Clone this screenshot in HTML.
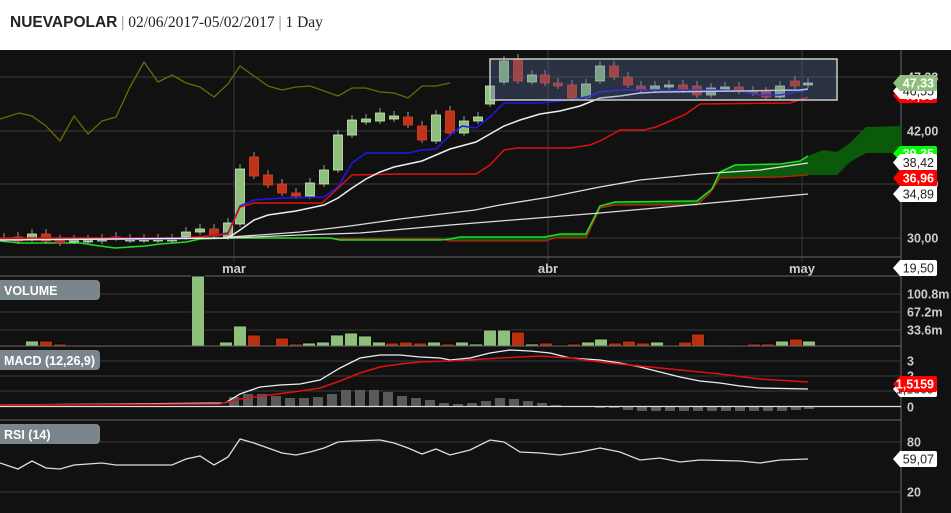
<!DOCTYPE html>
<html><head><meta charset="utf-8"><style>
html,body{margin:0;padding:0;background:#fff;width:951px;height:513px;overflow:hidden;font-family:"Liberation Sans",sans-serif}
#hdr{position:absolute;left:10px;top:14px;font-size:15.5px;color:#222;font-family:"Liberation Serif",serif}
#hdr b{font-family:"Liberation Sans",sans-serif;font-weight:bold}
#hdr span{color:#777}
svg{position:absolute;left:0;top:50px}
</style></head><body>
<div id="hdr"><b>NUEVAPOLAR</b> <span>|</span> 02/06/2017-05/02/2017 <span>|</span> 1 Day</div>
<svg id="s" width="951" height="463" viewBox="0 50 951 463" xmlns="http://www.w3.org/2000/svg" font-family="Liberation Sans, sans-serif"></svg>
<script>
const s=document.getElementById('s');let h='';
h+='<rect x="0" y="50" width="951" height="463" fill="#111"/>';
[77,131,184,238].forEach(y=>h+=`<line x1="0" x2="901" y1="${y}" y2="${y}" stroke="#3a3a3a"/>`);
[294,312,330,361,376,391,442,492].forEach(y=>h+=`<line x1="0" x2="901" y1="${y}" y2="${y}" stroke="#3a3a3a"/>`);
[234,548,802].forEach(x=>h+=`<line x1="${x}" x2="${x}" y1="50" y2="262" stroke="#3a3a3a"/>`);
[257,276,420].forEach(y=>h+=`<line x1="0" x2="901" y1="${y}" y2="${y}" stroke="#666"/>`);
h+='<line x1="901" x2="901" y1="50" y2="513" stroke="#666"/>';
[[234,'mar'],[548,'abr'],[802,'may']].forEach(a=>h+=`<text x="${a[0]}" y="273" fill="#ccc" font-size="13" font-weight="bold" text-anchor="middle">${a[1]}</text>`);
const G=[[450,239],[460,237],[545,237],[560,234],[586,234],[600,206],[615,202],[697,201],[712,189],[720,172],[735,165],[780,164],[800,161],[808,156]];
const R=[[450,241],[545,241],[555,238],[586,238],[600,208],[615,205],[697,205],[710,193],[720,178],[780,177],[808,175]];
const G0=[[0,241],[20,243],[80,243],[100,246],[115,248],[145,246],[160,244],[186,242],[200,239],[230,238],[330,238],[340,240],[440,240]];
const R0=[[0,239],[230,238],[330,238],[340,239],[440,239]];
const P=a=>a.map(p=>p.join(',')).join(' ');
h+=`<polygon points="${P(G.concat(R.slice().reverse()))}" fill="#0b5a0b"/>`;
h+=`<polygon points="808,156 823,150 837,152 850,143 866,127 901,126 901,153 866,153 850,162 837,175 808,175" fill="#0b5a0b"/>`;
const L=(a,c,w)=>h+=`<polyline points="${P(a)}" fill="none" stroke="${c}" stroke-width="${w||1.3}"/>`;
L(R0.concat(R),'#c02010');L(G0.concat(G),'#22dd22',1.6);
L([[0,119],[19,113],[32,116],[46,126],[60,141],[74,116],[88,134],[102,121],[116,117],[130,87],[144,62],[158,82],[172,75],[186,83],[200,87],[214,97],[228,84],[240,66],[254,76],[268,86],[282,90],[296,87],[310,86],[324,91],[338,96],[352,88],[366,88],[380,92],[394,93],[408,98],[422,86],[436,86],[450,83]],'#6b6b00');
L([[230,238],[300,235],[360,233],[450,225],[500,221],[600,213],[700,204],[808,194]],'#ddd');
L([[230,237],[260,235],[300,232],[350,226],[400,219],[450,213],[475,210],[500,205],[550,197],[600,187],[640,180],[700,174],[760,170],[808,163]],'#ddd');
const C=[[4,238,239,0],[18,237,241,0],[32,234,239,1],[46,234,241,0],[60,240,243,0],[74,240,241,1],[88,240,241,1],[102,239,241,1],[116,237,238,0],[130,239,240,1],[144,239,240,1],[158,239,240,1],[172,239,240,1],[186,232,237,1],[200,229,232,1],[214,229,236,0],[228,223,237,1],[240,169,224,1],[254,157,176,0],[268,175,185,0],[282,184,193,0],[296,193,196,0],[310,183,196,1],[324,170,184,1],[338,135,170,1],[352,120,135,1],[366,119,122,1],[380,113,121,1],[394,116,119,1],[408,117,125,0],[422,126,140,0],[436,115,141,1],[450,111,133,0],[464,121,133,1],[478,117,121,1],[490,86,104,1],[504,61,82,1],[518,59,81,0],[532,75,82,1],[545,75,83,0],[558,83,86,0],[572,85,98,0],[586,84,97,1],[600,66,81,1],[614,66,77,0],[628,77,85,0],[641,86,90,0],[655,86,90,1],[669,85,87,1],[683,85,90,0],[697,86,95,0],[711,88,95,1],[725,87,89,1],[739,87,91,0],[753,91,93,0],[766,92,97,0],[780,86,97,1],[795,81,86,0],[808,83,85,1]];
C.forEach(c=>{const col=c[3]?'#8ec07c':'#c0321a',st=c[3]?'#cfe8c0':'#e04020';
h+=`<line x1="${c[0]}" x2="${c[0]}" y1="${c[1]-5}" y2="${c[2]+3}" stroke="#bbb" stroke-width=".8"/>`;
h+=`<rect x="${c[0]-4.5}" y="${c[1]}" width="9" height="${Math.max(2,c[2]-c[1])}" fill="${col}" stroke="${st}" stroke-width=".8"/>`;});
L([[0,240],[186,239],[228,233],[240,206],[254,200],[282,198],[324,197],[338,187],[352,163],[366,153],[408,153],[422,150],[436,149],[450,135],[462,126],[476,128],[490,117],[504,103],[540,103],[570,100],[590,96],[600,92],[620,90],[720,90],[740,91],[760,95],[780,95],[800,91],[808,90]],'#1a1aee',1.5);
L([[0,238],[186,238],[228,234],[240,207],[254,203],[322,203],[336,190],[352,175],[400,174],[476,174],[490,165],[504,150],[518,148],[570,148],[590,145],[600,141],[620,130],[644,130],[656,127],[670,121],[686,114],[700,104],[790,103],[802,99],[808,97]],'#e01010',1.5);
L([[0,240],[228,238],[240,230],[254,220],[268,215],[296,211],[324,205],[338,198],[352,188],[366,179],[380,172],[394,167],[422,161],[436,155],[450,149],[476,142],[490,134],[504,126],[520,120],[540,114],[560,111],[580,106],[600,98],[620,96],[640,93],[660,92],[740,91],[800,90],[808,89]],'#eee',1.5);
h+='<rect x="490" y="59" width="347" height="41" fill="rgba(90,110,160,0.35)" stroke="#ccc" stroke-width="1.5"/>';
const V=[[32,341,1],[46,341,0],[60,344,0],[102,345,1],[198,276,1],[226,342,1],[240,326,1],[254,335,0],[282,338,0],[296,344,0],[309,343,1],[323,342,1],[337,335,1],[351,333,1],[365,336,1],[379,342,1],[392,343,0],[406,342,0],[420,343,0],[434,342,1],[448,344,0],[462,342,1],[476,344,1],[490,330,1],[504,330,1],[518,332,0],[532,344,1],[546,343,0],[560,345,0],[574,344,0],[588,342,1],[601,339,1],[615,343,0],[629,341,0],[643,343,0],[657,342,1],[671,345,1],[685,342,0],[698,334,0],[726,345,1],[740,345,0],[754,344,0],[768,344,0],[782,341,1],[796,339,0],[809,341,1]];
V.forEach(v=>h+=`<rect x="${v[0]-6.5}" y="${v[1]}" width="13" height="${346-v[1]}" fill="${v[2]?'#8ec07c':'#b8300e'}" stroke="#000" stroke-width=".8"/>`);
h+='<line x1="0" x2="901" y1="346" y2="346" stroke="#666"/>';
const Hh=[[234,397],[248,394],[262,394],[276,396],[290,398],[304,398],[318,397],[332,394],[346,390],[360,390],[374,390],[388,392],[402,396],[416,398],[430,400],[444,403],[458,404],[472,403],[486,401],[500,398],[514,399],[528,401],[542,403],[556,405],[600,408],[614,408],[628,410],[642,411],[656,411],[670,411],[684,411],[698,411],[712,411],[726,411],[740,411],[754,411],[768,411],[782,411],[796,410],[809,409]];
Hh.forEach(b=>h+=`<rect x="${b[0]-5}" y="${Math.min(b[1],406)}" width="10" height="${Math.abs(406-b[1])}" fill="#5a5a5a"/>`);
h+='<line x1="0" x2="901" y1="406.5" y2="406.5" stroke="#ddd" stroke-width="1.3"/>';
L([[0,405],[225,403],[240,394],[260,387],[280,385],[300,384],[320,380],[340,368],[360,358],[380,355],[400,355],[420,357],[440,358],[450,360],[470,358],[490,353],[510,350],[530,351],[550,353],[570,358],[600,360],[620,363],[640,367],[660,372],[680,377],[700,381],[720,383],[740,386],[760,388],[808,389]],'#eee');
L([[0,405],[220,404],[240,399],[270,395],[300,391],[320,388],[340,381],[360,373],[380,367],[400,364],[420,362],[450,361],[500,358],[540,356],[570,358],[600,362],[640,366],[680,370],[720,374],[760,379],[808,382]],'#e01010',1.5);
L([[0,463],[18,469],[32,461],[46,468],[60,469],[74,465],[88,464],[102,463],[116,465],[172,465],[186,459],[200,456],[214,465],[228,457],[240,439],[254,443],[268,448],[282,453],[296,455],[310,452],[324,448],[338,442],[352,441],[380,440],[394,443],[408,448],[422,454],[436,449],[450,455],[470,450],[490,440],[504,442],[520,452],[540,453],[560,455],[580,452],[600,448],[620,452],[640,460],[660,458],[680,462],[700,460],[740,461],[760,463],[780,460],[808,459]],'#ddd');
[[280,'VOLUME'],[350,'MACD (12,26,9)'],[424,'RSI (14)']].forEach(a=>{h+=`<rect x="-6" y="${a[0]}" width="106" height="20" rx="4" fill="#7b868c"/><text x="4" y="${a[0]+15}" fill="#fff" font-size="12.5" font-weight="bold">${a[1]}</text>`});
[[77,'47,33'],[131,'42,00'],[184,'36,00'],[238,'30,00'],[294,'100.8m'],[312,'67.2m'],[330,'33.6m'],[361,'3'],[376,'2'],[391,'1'],[407,'0'],[442,'80'],[492,'20']].forEach(a=>h+=`<text x="907" y="${a[0]+4.5}" fill="#ccc" font-size="12.5" font-weight="bold">${a[1]}</text>`);
const T=(y1,y2,bg,fg,t,b)=>{const m=(y1+y2)/2;h+=`<path d="M893,${m} L900,${y1} H935 a2,2 0 0 1 2,2 V${y2-2} a2,2 0 0 1 -2,2 H900 Z" fill="${bg}"/><text x="934" y="${m+4.5}" fill="${fg}" font-size="12.5" ${b?'font-weight="bold"':''} text-anchor="end">${t}</text>`};
T(88,103,'#f00','#fff','40,88',1);T(83,99,'#fff','#222','46,55');T(75,91,'#8ec07c','#fff','47,33',1);
T(146,161,'#0f0','#fff','39,35',1);T(154,171,'#fff','#222','38,42');T(170,186,'#f00','#fff','36,96',1);T(186,202,'#fff','#222','34,89');
T(260,276,'#fff','#222','19,50');
T(381,397,'#fff','#222','1,1609');T(376,392,'#f00','#fff','1,5159',1);
T(451,467,'#fff','#222','59,07');
s.innerHTML=h;
</script>
</body></html>
